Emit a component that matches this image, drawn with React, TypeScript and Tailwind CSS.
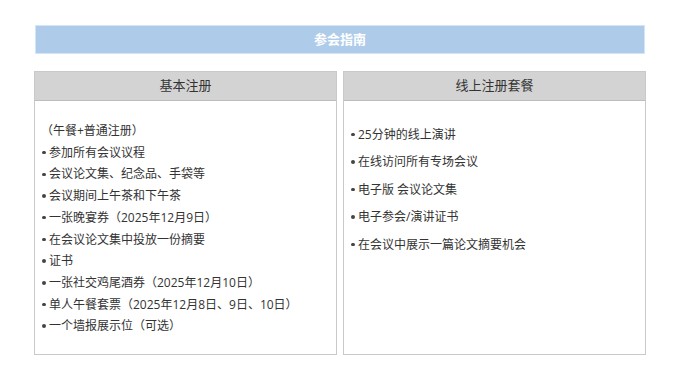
const basic = [
  "参加所有会议议程",
  "会议论文集、纪念品、手袋等",
  "会议期间上午茶和下午茶",
  "一张晚宴券（2025年12月9日）",
  "在会议论文集中投放一份摘要",
  "证书",
  "一张社交鸡尾酒券（2025年12月10日）",
  "单人午餐套票（2025年12月8日、9日、10日）",
  "一个墙报展示位（可选）",
];

const online = [
  "25分钟的线上演讲",
  "在线访问所有专场会议",
  "电子版 会议论文集",
  "电子参会/演讲证书",
  "在会议中展示一篇论文摘要机会",
];

function Item({ text }: { text: string }) {
  return (
    <li className="flex items-center">
      <span className="w-[8px] flex-none pl-[1px]">
        <span className="block w-[3.5px] h-[3.5px] rounded-full bg-[#444]" />
      </span>
      <span>{text}</span>
    </li>
  );
}

function Card({ title, children }: { title: string; children: React.ReactNode }) {
  return (
    <div className="border border-[#c9c9c9] bg-white flex flex-col">
      <div className="h-[29px] bg-[#d3d3d3] border-b border-[#bdbdbd] flex items-center justify-center text-[13px] text-[#333]">
        {title}
      </div>
      <div className="flex-1 px-[6px] pt-[19px] pb-[17px] text-[12px] text-[#333]">{children}</div>
    </div>
  );
}

export default function App() {
  return (
    <div
      className="w-[680px] h-[382px] bg-white"
      style={{ fontFamily: '"Open Sans", "Noto Sans CJK SC", sans-serif' }}
    >
      <div className="w-[612px] mx-auto pt-[25px]">
        <div className="mx-[1px] h-[29px] bg-[#aecce9] border border-[#d4e5f5] flex items-center justify-center text-white font-bold text-[13px]">
          参会指南
        </div>
        <div className="mt-[17px] grid grid-cols-2 gap-[6px]">
          <Card title="基本注册">
            <ul className="leading-[21.7px]">
              <li>（午餐+普通注册）</li>
              {basic.map((t) => (
                <Item key={t} text={t} />
              ))}
            </ul>
          </Card>
          <Card title="线上注册套餐">
            <ul className="pt-[1px] leading-[27.4px]">
              {online.map((t) => (
                <Item key={t} text={t} />
              ))}
            </ul>
          </Card>
        </div>
      </div>
    </div>
  );
}
